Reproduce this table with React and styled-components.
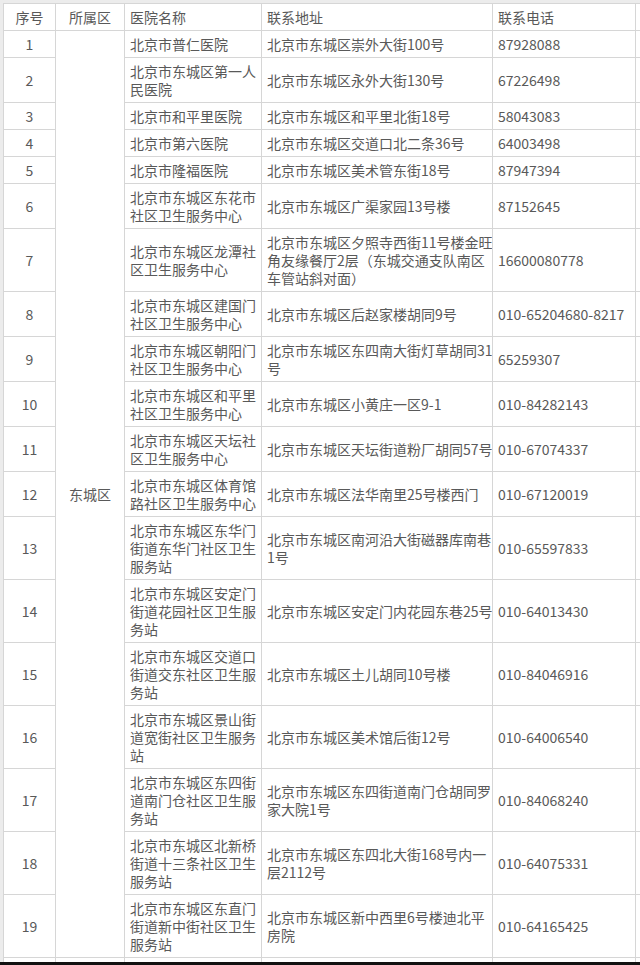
import styled, { createGlobalStyle } from 'styled-components'

const GlobalStyle = createGlobalStyle`
  html, body {
    margin: 0;
    padding: 0;
    background: #ececec;
    overflow: hidden;
  }
`

const Page = styled.div`
  width: 640px;
  height: 965px;
  overflow: hidden;
  padding: 3px 0 0 3px;
  box-sizing: border-box;
  font-family: "Noto Sans CJK SC", "Noto Sans", sans-serif;
  font-size: 14px;
  color: #595959;
`

const Table = styled.table`
  table-layout: fixed;
  width: 732px;
  border-collapse: collapse;
  background: #ffffff;
`

const Cell = styled.td`
  border: 1px solid #d6d6d6;
  padding: 4px 5px;
  line-height: 18px;
  vertical-align: middle;
  white-space: nowrap;
  overflow: hidden;
  text-align: ${({ $center }) => ($center ? 'center' : 'left')};
`

const HeadCell = styled(Cell).attrs({ as: 'th' })`
  font-weight: normal;
`

const Line = styled.div`
  display: block;
  height: 18px;
  line-height: 18px;
`

const BottomBar = styled.div`
  position: fixed;
  left: 0;
  right: 0;
  bottom: 0;
  height: 3px;
  background: #111111;
`

const rows = [
  [['北京市普仁医院'], ['北京市东城区崇外大街100号'], '87928088'],
  [['北京市东城区第一人', '民医院'], ['北京市东城区永外大街130号'], '67226498'],
  [['北京市和平里医院'], ['北京市东城区和平里北街18号'], '58043083'],
  [['北京市第六医院'], ['北京市东城区交道口北二条36号'], '64003498'],
  [['北京市隆福医院'], ['北京市东城区美术管东街18号'], '87947394'],
  [['北京市东城区东花市', '社区卫生服务中心'], ['北京市东城区广渠家园13号楼'], '87152645'],
  [['北京市东城区龙潭社', '区卫生服务中心'], ['北京市东城区夕照寺西街11号楼金旺', '角友缘餐厅2层（东城交通支队南区', '车管站斜对面）'], '16600080778'],
  [['北京市东城区建国门', '社区卫生服务中心'], ['北京市东城区后赵家楼胡同9号'], '010-65204680-8217'],
  [['北京市东城区朝阳门', '社区卫生服务中心'], ['北京市东城区东四南大街灯草胡同31', '号'], '65259307'],
  [['北京市东城区和平里', '社区卫生服务中心'], ['北京市东城区小黄庄一区9-1'], '010-84282143'],
  [['北京市东城区天坛社', '区卫生服务中心'], ['北京市东城区天坛街道粉厂胡同57号'], '010-67074337'],
  [['北京市东城区体育馆', '路社区卫生服务中心'], ['北京市东城区法华南里25号楼西门'], '010-67120019'],
  [['北京市东城区东华门', '街道东华门社区卫生', '服务站'], ['北京市东城区南河沿大街磁器库南巷', '1号'], '010-65597833'],
  [['北京市东城区安定门', '街道花园社区卫生服', '务站'], ['北京市东城区安定门内花园东巷25号'], '010-64013430'],
  [['北京市东城区交道口', '街道交东社区卫生服', '务站'], ['北京市东城区土儿胡同10号楼'], '010-84046916'],
  [['北京市东城区景山街', '道宽街社区卫生服务', '站'], ['北京市东城区美术馆后街12号'], '010-64006540'],
  [['北京市东城区东四街', '道南门仓社区卫生服', '务站'], ['北京市东城区东四街道南门仓胡同罗', '家大院1号'], '010-84068240'],
  [['北京市东城区北新桥', '街道十三条社区卫生', '服务站'], ['北京市东城区东四北大街168号内一', '层2112号'], '010-64075331'],
  [['北京市东城区东直门', '街道新中街社区卫生', '服务站'], ['北京市东城区新中西里6号楼迪北平', '房院'], '010-64165425'],
]

const Lines = ({ lines }) => lines.map((line, i) => <Line key={i}>{line}</Line>)

export default function App() {
  return (
    <Page>
      <GlobalStyle />
      <Table>
        <colgroup>
          <col style={{ width: 52 }} />
          <col style={{ width: 69 }} />
          <col style={{ width: 137 }} />
          <col style={{ width: 231 }} />
          <col style={{ width: 143 }} />
          <col style={{ width: 100 }} />
        </colgroup>
        <thead>
          <tr>
            <HeadCell $center>序号</HeadCell>
            <HeadCell $center>所属区</HeadCell>
            <HeadCell>医院名称</HeadCell>
            <HeadCell>联系地址</HeadCell>
            <HeadCell>联系电话</HeadCell>
            <HeadCell />
          </tr>
        </thead>
        <tbody>
          {rows.map(([name, address, phone], i) => (
            <tr key={i}>
              <Cell $center>{i + 1}</Cell>
              {i === 0 && (
                <Cell $center rowSpan={rows.length}>
                  东城区
                </Cell>
              )}
              <Cell>
                <Lines lines={name} />
              </Cell>
              <Cell>
                <Lines lines={address} />
              </Cell>
              <Cell>{phone}</Cell>
              <Cell />
            </tr>
          ))}
          <tr>
            <Cell />
            <Cell />
            <Cell />
            <Cell />
            <Cell />
            <Cell />
          </tr>
        </tbody>
      </Table>
      <BottomBar />
    </Page>
  )
}
